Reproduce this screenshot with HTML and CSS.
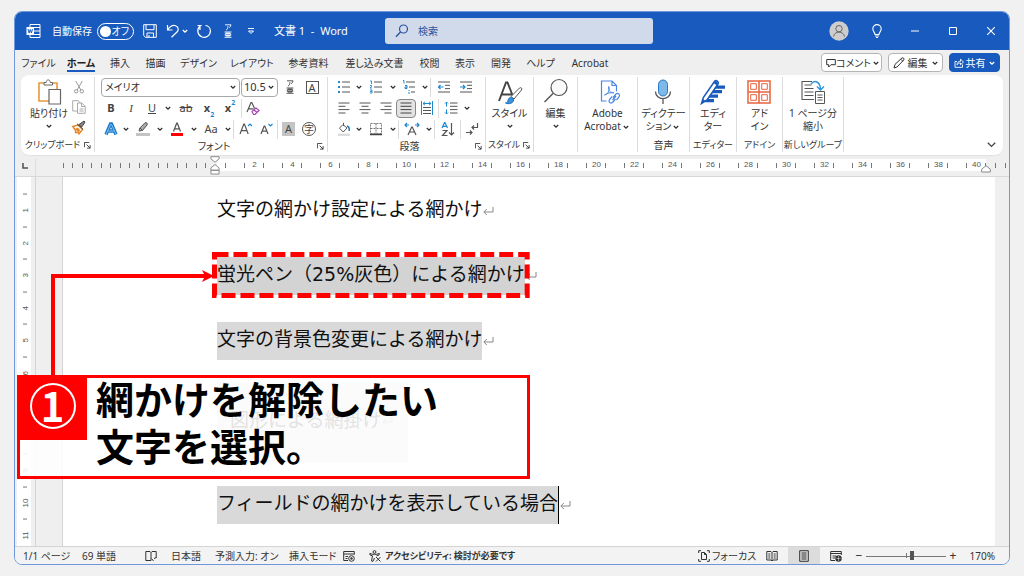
FILE: index.html
```html
<!DOCTYPE html>
<html lang="ja">
<head>
<meta charset="utf-8">
<title>文書 1 - Word</title>
<link rel="stylesheet" href="styles.css">
</head>
<body>
<svg class="defs" aria-hidden="true">
  <symbol id="chev" viewBox="0 0 8 8"><path d="M1.800 3l2.200 2.200L6.200 3" fill="none" stroke="currentColor" stroke-width="1.300"/></symbol>
  <symbol id="ret" viewBox="0 0 12 12"><path d="M11 2v5H2M4.800 4L1.800 7l3 3" fill="none" stroke="currentColor" stroke-width="1"/></symbol>
  <symbol id="launch" viewBox="0 0 8 8"><path d="M.5 6V.5H6M3 3l4 4M7 3.500V7H3.500" fill="none" stroke="currentColor"/></symbol>
  <symbol id="furi" viewBox="0 0 8 14"><path d="M1 .8h6c-.3 1.800-1 2.400-2 2.900M3.900 2.200c0 2.200-.6 3.200-1.900 4M.5 8h7M.5 13.300h7M3 8v5M5 8v5M1.300 9.600h5.400v2H1.300z" fill="none" stroke="currentColor" stroke-width=".9"/></symbol>
</svg>
<div class="window">
  <header class="titlebar">
    <div class="quick">
      <svg class="word-logo" viewBox="0 0 15 16"><path d="M4 4V1.500h10v13H4V12M4 4.500h10M8 8h6M8 11.500h6" fill="none" stroke="#fff"/><path d="M.5 4h7.500v8H.5z" fill="#fff"/><path d="M2 6l1.100 4L4.300 6.500 5.400 10 6.500 6" fill="none" stroke="#185abd"/></svg>
      <span class="autosave-label" id="as">自動保存</span>
      <button class="toggle" aria-labelledby="as"><i></i>オフ</button>
      <button class="bare save" aria-label="保存"><svg viewBox="0 0 14 14"><path d="M.7.7h12.600v12.600H2.500L.7 11.500zM3 .7v5h8v-5M4 13.300V9h6.500v4.300M6 11v2" fill="none" stroke="currentColor"/></svg></button>
      <button class="bare undo" aria-label="元に戻す"><svg viewBox="0 0 14 14"><path d="M1.500 1v5h5M1.800 5.700C4 2.500 7 .8 9.600 1.800c3 1.200 3.300 4.300 1.400 6.200L5.500 13.300" fill="none" stroke="currentColor" stroke-width="1.200"/></svg></button>
      <svg class="chev"><use href="#chev"/></svg>
      <button class="bare redo" aria-label="繰り返し"><svg viewBox="0 0 14 14"><path d="M8.500 1.500c3 .3 4.900 2.700 4.900 5.300A6.300 6.300 0 1 1 3 2.200M3 6V1.500M.5 1.500h4.200" fill="none" stroke="currentColor" stroke-width="1.200"/></svg></button>
      <button class="bare ruby" aria-label="ルビ"><svg viewBox="0 0 8 14"><use href="#furi"/></svg></button>
      <button class="bare more" aria-label="カスタマイズ"><svg viewBox="0 0 8 8"><path d="M1 1.500h6M1.500 4L4 6.500 6.500 4z" fill="none" stroke="currentColor"/></svg></button>
      <span class="doc-title">文書 1&nbsp; -&nbsp; Word</span>
    </div>
    <label class="search"><svg viewBox="0 0 14 14"><circle cx="8.500" cy="5" r="4" fill="none" stroke="currentColor" stroke-width="1.200"/><path d="M5.500 8L1 12.800" stroke="currentColor" stroke-width="1.300"/></svg><input type="text" placeholder="検索" aria-label="検索"></label>
    <div class="sys">
      <button class="bare avatar" aria-label="アカウント"><svg viewBox="0 0 20 20"><circle cx="10" cy="10" r="9.700" fill="#cdcdcd"/><circle cx="10" cy="7.700" r="3.200" fill="none" stroke="#666"/><path d="M4.500 15.500c.8-3 2.800-4.400 5.500-4.400s4.700 1.400 5.500 4.400" fill="none" stroke="#666"/></svg></button>
      <button class="bare bulb" aria-label="ヒント"><svg viewBox="0 0 10 14"><path d="M3 10.500C3 8.500.8 7.500.8 4.800a4.200 4.200 0 0 1 8.400 0C9.200 7.500 7 8.500 7 10.500zM3 12h4M4 13.500h2" fill="none" stroke="currentColor" stroke-width="1.100"/></svg></button>
      <button class="bare ctl" aria-label="最小化"><svg viewBox="0 0 10 10"><path d="M1 5h8" stroke="currentColor"/></svg></button>
      <button class="bare ctl" aria-label="最大化"><svg viewBox="0 0 10 10"><path d="M1.500 1.500h7v7h-7z" fill="none" stroke="currentColor"/></svg></button>
      <button class="bare ctl" aria-label="閉じる"><svg viewBox="0 0 10 10"><path d="M1.200 1.200l7.600 7.600M8.800 1.200L1.200 8.800" stroke="currentColor" stroke-width="1.100"/></svg></button>
    </div>
  </header>

  <div class="tabrow">
    <nav class="tabs">
      <a href="#">ファイル</a><a href="#" class="current"><span>ホーム</span></a><a href="#">挿入</a><a href="#">描画</a><a href="#">デザイン</a><a href="#">レイアウト</a><a href="#">参考資料</a><a href="#">差し込み文書</a><a href="#">校閲</a><a href="#">表示</a><a href="#">開発</a><a href="#">ヘルプ</a><a href="#">Acrobat</a>
    </nav>
    <div class="actions">
      <button class="act comment"><svg class="i10" viewBox="0 0 10 10"><path d="M.7 1.500h8.600v5.200H5L2.700 9V6.700h-2z" fill="none" stroke="currentColor"/></svg>コメント<svg class="chev"><use href="#chev"/></svg></button>
      <button class="act edit"><svg class="i12" viewBox="0 0 12 12"><path d="M1 11l1-3.600L9 .9c1.300-.6 2.500.8 1.800 2L4.200 9.900zM7.800 2.200l2 2" fill="none" stroke="currentColor"/></svg>編集<svg class="chev"><use href="#chev"/></svg></button>
      <button class="act share"><svg class="i10" viewBox="0 0 10 10"><path d="M3 3.500H1v5.800h7.500V6.500M3 6.800C3.200 4.500 4.500 3.300 6.500 3.300V1.200L9.500 4 6.500 6.800V5C5 5 4 5.500 3 6.800z" fill="none" stroke="currentColor" stroke-width=".9"/></svg>共有<svg class="chev"><use href="#chev"/></svg></button>
    </div>
  </div>

  <section class="ribbon">
    <div class="group g-clip">
      <div class="clip">
        <button class="big"><svg class="i26" viewBox="0 0 26 26"><path d="M3 4h18v18H3z" fill="#fff" stroke="#e8993b" stroke-width="1.600"/><path d="M8 6V3.500h2.200C10.500 0 14 0 14.300 3.500H16.500V6z" fill="#fff" stroke="#666"/><path d="M13 10.500h11.500V25H13z" fill="#fff" stroke="#666" stroke-width="1.200"/></svg><span>貼り付け</span><svg class="chev"><use href="#chev"/></svg></button>
        <div class="clip-side">
          <button class="t" aria-label="切り取り"><svg class="i14" viewBox="0 0 14 14"><path d="M3.700 1l5.200 9M10.300 1L5.100 10" stroke="#999" fill="none"/><circle cx="4.200" cy="11.300" r="1.700" fill="none" stroke="#999"/><circle cx="9.800" cy="11.300" r="1.700" fill="none" stroke="#999"/></svg></button>
          <button class="t" aria-label="コピー"><svg class="i14" viewBox="0 0 14 14"><path d="M5 11H.7V.7H6L8.500 3M5.500 3h4.200l3.500 3.300v7H5.500zM9.500 3v3.500H13M7.500 9h4M7.500 11h4" fill="none" stroke="#aaa"/></svg></button>
          <button class="t" aria-label="書式のコピー"><svg class="i14" viewBox="0 0 14 14"><path d="M.8 6.500l5.400-1.500 4.300 4.500L7 13.800 5.500 12.300 3.500 12.500 3.600 10.500z" fill="#fff" stroke="#e8862a" stroke-width="1.500"/><path d="M3 9l3-1.500 2 2.500-1 2.500z" fill="#e8862a"/><path d="M5 3.800L11 9.300M7 4.500L9 3.200l3-2.200 1 1-2 3.200-1.500 2z" fill="#888" stroke="#444"/></svg></button>
        </div>
      </div>
      <div class="glabel small"><span>クリップボード</span><svg class="launch"><use href="#launch"/></svg></div>
    </div>

    <div class="group g-font">
      <div class="rows">
        <div class="r">
          <label class="combo family"><select aria-label="フォント"><option>メイリオ</option></select><svg class="chev"><use href="#chev"/></svg></label>
          <label class="combo size"><select aria-label="フォント サイズ"><option>10.5</option></select><svg class="chev"><use href="#chev"/></svg></label>
          <button class="t w24" aria-label="ルビ"><svg class="furi" viewBox="0 0 8 14"><use href="#furi"/></svg></button>
          <button class="t w20" aria-label="囲み線"><span class="boxed">A</span></button>
        </div>
        <div class="r">
          <button class="t w20 b">B</button><button class="t w20 it">I</button><button class="t w22 un">U</button><svg class="chev"><use href="#chev"/></svg>
          <button class="t w26 st">ab</button><button class="t w20 b">x<sub>2</sub></button><button class="t w22 b">x<sup>2</sup></button>
          <button class="t w22 split" aria-label="書式クリア"><svg class="i14" viewBox="0 0 14 14"><path d="M1 11L5 1.500h.8l2.800 6M2.500 7.800h5" fill="none" stroke="#555" stroke-width="1.200"/><path d="M6 10.500l4-3.500 3 2.500-4 4H7.500zM8 9l3 2.500" fill="#fff" stroke="#a63fb5" stroke-width="1.200"/></svg></button>
        </div>
        <div class="r">
          <button class="t w20" aria-label="文字の効果"><svg class="i14" viewBox="0 0 14 14"><path d="M2 12.500L6.500 2h1L12 12.500M4 9h6" fill="none" stroke="#1f78c8" stroke-width="3.400"/><path d="M2 12.500L6.500 2.500h1L12 12.500M4 9h6" fill="none" stroke="#7cc0f2" stroke-width="1"/></svg></button><svg class="chev"><use href="#chev"/></svg>
          <button class="t w24" aria-label="蛍光ペン"><svg class="i14" viewBox="0 0 14 14"><path d="M0 11h14v3H0z" fill="#c4c4c4"/><path d="M3 9l.8-3L9 .8c1.500-.8 3 .8 2 2.200L6.500 8.500zM4 6l2.500 2.500" fill="#aaa" stroke="#555"/></svg></button><svg class="chev"><use href="#chev"/></svg>
          <button class="t w24" aria-label="フォントの色"><svg class="i14" viewBox="0 0 14 14"><path d="M1 11h12v3H1z" fill="#f00"/><path d="M3.500 9.500L6.700 1.200h.6L10.500 9.500M4.500 6.800h5" fill="none" stroke="#555" stroke-width="1.200"/></svg></button><svg class="chev"><use href="#chev"/></svg>
          <button class="t w24">Aa</button><svg class="chev"><use href="#chev"/></svg>
          <button class="t w24 split" aria-label="拡大"><svg class="i14" viewBox="0 0 14 14"><path d="M1 12L4.800 2h.6L9.200 12M2.200 8.600h5.800" fill="none" stroke="#555" stroke-width="1.200"/><path d="M9 4l2-2 2 2" fill="none" stroke="#1e88d2" stroke-width="1.200"/></svg></button><button class="t w20" aria-label="縮小"><svg class="i14" viewBox="0 0 14 14"><path d="M1 12L4.200 4h.6L8 12M2.200 9.200h4.600" fill="none" stroke="#555" stroke-width="1.200"/><path d="M8.500 2l2 2 2-2" fill="none" stroke="#1e88d2" stroke-width="1.200"/></svg></button>
          <button class="t w22 split"><span class="shade">A</span></button><button class="t w20"><span class="ring">字</span></button>
        </div>
      </div>
      <div class="glabel"><span>フォント</span><svg class="launch"><use href="#launch"/></svg></div>
    </div>

    <div class="group g-para">
      <div class="rows">
        <div class="r">
          <button class="t w20" aria-label="箇条書き"><svg class="i14" viewBox="0 0 14 14"><path d="M1 1h2v2H1zM1 6h2v2H1zM1 11h2v2H1z" fill="#1e88d2"/><path d="M5 2h8M5 7h8M5 12h8" stroke="#555"/></svg></button><svg class="chev"><use href="#chev"/></svg>
          <button class="t w24" aria-label="段落番号"><svg class="i14" viewBox="0 0 14 14"><path d="M1 1h1.500v3M1 5.500h1.500v1L1 8h2M1 10h2v3H1M1 11.500h2" fill="none" stroke="#1e88d2" stroke-width=".9"/><path d="M5 2h8M5 7h8M5 12h8" stroke="#555"/></svg></button><svg class="chev"><use href="#chev"/></svg>
          <button class="t w22" aria-label="アウトライン"><svg class="i14" viewBox="0 0 14 14"><path d="M1 .5h1v3M3 5.500h2v3H3v-1.500h2M7 10v1M7 12v2" fill="none" stroke="#1e88d2"/><path d="M4 2h9M7 7h6M9 12h4" stroke="#555"/></svg></button><svg class="chev"><use href="#chev"/></svg>
          <button class="t w26 split" aria-label="インデントを減らす"><svg class="i14" viewBox="0 0 14 14"><path d="M1 2h12M8 5.300h5M8 8.600h5M1 12h12" stroke="#555"/><path d="M6.500 7h-5M3.500 5l-2 2 2 2" fill="none" stroke="#1e88d2" stroke-width="1.200"/></svg></button><button class="t w20" aria-label="インデントを増やす"><svg class="i14" viewBox="0 0 14 14"><path d="M1 2h12M8 5.300h5M8 8.600h5M1 12h12" stroke="#555"/><path d="M1 7h5M4 5l2 2-2 2" fill="none" stroke="#1e88d2" stroke-width="1.200"/></svg></button>
        </div>
        <div class="r">
          <button class="t w20" aria-label="左揃え"><svg class="i14" viewBox="0 0 14 14"><path d="M1.500 2h11M1.500 5.300h7M1.500 8.600h11M1.500 12h7" stroke="#555"/></svg></button><button class="t w22" aria-label="中央揃え"><svg class="i14" viewBox="0 0 14 14"><path d="M1.500 2h11M3.500 5.300h7M1.500 8.600h11M3.500 12h7" stroke="#555"/></svg></button><button class="t w20" aria-label="右揃え"><svg class="i14" viewBox="0 0 14 14"><path d="M1.500 2h11M5.500 5.300h7M1.500 8.600h11M5.500 12h7" stroke="#555"/></svg></button><button class="t w20 on" aria-label="両端揃え"><svg class="i14" viewBox="0 0 14 14"><path d="M1.500 2h11M1.500 5.300h11M1.500 8.600h11M1.500 12h11" stroke="#444"/></svg></button><button class="t w22" aria-label="均等割り付け"><svg class="i14" viewBox="0 0 14 14"><path d="M1.500 0v14M12.500 0v14" stroke="#1e88d2"/><path d="M3 2.500h8M5 .8L3 2.500l2 1.700M9 .8l2 1.700-2 1.700" fill="none" stroke="#1e88d2"/><path d="M3 6.500h8M3 9.500h8M3 12.500h8" stroke="#555"/></svg></button>
          <button class="t w24 split" aria-label="行間"><svg class="i14" viewBox="0 0 14 14"><path d="M2.500 1v4.500M1 2.500L2.500 1 4 2.500M2.500 8.500V13M1 11.500L2.500 13 4 11.500" fill="none" stroke="#1e88d2"/><path d="M6 2h7.500M6 5.300h7.500M6 8.600h7.500M6 12h7.500" stroke="#555"/></svg></button><svg class="chev"><use href="#chev"/></svg>
        </div>
        <div class="r">
          <button class="t w20" aria-label="塗りつぶし"><svg class="i14" viewBox="0 0 14 14"><path d="M1 11.500h12V14H1z" fill="#ddd"/><path d="M6.500.8v3M6 2.500L2.500 6.200 6.200 10 10 6z" fill="none" stroke="#555"/><path d="M10 4c2 .5 2.500 2 2.200 5" fill="none" stroke="#1673c4" stroke-width="1.500"/></svg></button><svg class="chev"><use href="#chev"/></svg>
          <button class="t w24" aria-label="罫線"><svg class="i14" viewBox="0 0 14 14"><path d="M1.500 1.500h11v10h-11zM7 1.500v10M1.500 6.500h11" fill="none" stroke="#777" stroke-dasharray="2 1"/><path d="M1 12.500h12" stroke="#444" stroke-width="1.300"/></svg></button><svg class="chev"><use href="#chev"/></svg>
          <button class="t w26 split" aria-label="拡張書式"><svg class="i14" viewBox="0 0 14 14"><path d="M3 13L6.700 5h.6L11 13M4.500 10h5" fill="none" stroke="#555" stroke-width="1.200"/><path d="M0 3h4M2 1L0 3l2 2M14 3h-4M12 1l2 2-2 2" fill="none" stroke="#1e88d2" stroke-width="1.200"/></svg></button><svg class="chev"><use href="#chev"/></svg>
          <button class="t w26 split" aria-label="並べ替え"><svg class="i14" viewBox="0 0 14 14"><path d="M1 6L3.500.5h.5L6.500 6M2 4.300h3.600" fill="none" stroke="#1e88d2" stroke-width="1.200"/><path d="M1.500 8.500h4.500L1.500 13.500H6.500M10.500 1v12M8 10.500l2.500 2.500 2.500-2.500" fill="none" stroke="#555" stroke-width="1.200"/></svg></button><button class="t w22 split" aria-label="編集記号"><svg class="i14" viewBox="0 0 14 14"><path d="M12.500 1v4.500H7M9 3.500l-2 2 2 2M1 10.500h6M5 8.500l2 2-2 2" fill="none" stroke="#555" stroke-width="1.200"/></svg></button>
        </div>
      </div>
      <div class="glabel"><span>段落</span><svg class="launch"><use href="#launch"/></svg></div>
    </div>

    <div class="group g-style">
      <button class="big"><svg class="i26" viewBox="0 0 26 26"><path d="M2 22L9 3.500h1.500L17 20M4.500 15.500h10" fill="none" stroke="#444" stroke-width="1.900"/><path d="M14 17.500L22.500 9c1.500-1 3 .3 2 2L17 20z" fill="#fff" stroke="#555"/><path d="M8.500 24c2.500 0 2-2 3-4 1.500-2.500 5-1.500 5 1 0 3.500-5 4.500-8 3z" fill="#3b93dc" stroke="#1a6fc0"/></svg><span>スタイル</span><svg class="chev"><use href="#chev"/></svg></button>
      <div class="glabel small"><span>スタイル</span><svg class="launch"><use href="#launch"/></svg></div>
    </div>
    <div class="group g-edit">
      <button class="big"><svg class="i26" viewBox="0 0 26 26"><circle cx="16" cy="8.500" r="8" fill="#fafafa" stroke="#555" stroke-width="1.200"/><path d="M10 14.500L1.500 23" stroke="#555" stroke-width="1.400"/></svg><span>編集</span><svg class="chev"><use href="#chev"/></svg></button>
      <div class="glabel"></div>
    </div>
    <div class="group g-acro">
      <button class="big"><svg class="i26" viewBox="0 0 26 26"><path d="M11.500 22H6.500V2H17l4.500 4.500v6M17 2v4.500h4.500" fill="none" stroke="#4a86e8" stroke-width="1.200"/><path d="M9.500 16c4-1 5-4.500 4.300-8.500-.7 4 1.200 6 5 6.300-4-.3-6 .2-9.300 2.200z" fill="none" stroke="#4a86e8"/><path d="M18 18.500l3-3.500c2.500-1.500 4.500.7 3 3l-2.500 3M20.500 20l-3 3.500c-2.500 1.500-4.500-.7-3-3l2.500-3M17.500 21l3.500-4" fill="none" stroke="#4a86e8" stroke-width="1.200"/></svg><span>Adobe</span><span class="ln">Acrobat<svg class="chev"><use href="#chev"/></svg></span></button>
      <div class="glabel"></div>
    </div>
    <div class="group g-dict">
      <button class="big"><svg class="i26" viewBox="0 0 26 26"><rect x="7.500" y="1" width="9" height="16" rx="4.500" fill="#7db9ea" stroke="#2a77bd"/><path d="M4.500 12.500c0 9.500 15 9.500 15 0M12 20v5" fill="none" stroke="#555" stroke-width="1.300"/></svg><span>ディクテー</span><span class="ln">ション<svg class="chev"><use href="#chev"/></svg></span></button>
      <div class="glabel"><span>音声</span></div>
    </div>
    <div class="group g-editor">
      <button class="big"><svg class="i26" viewBox="0 0 26 26"><path d="M14 8.200h11M12 12.700h10M9 17.200h9M5 21.700h9" stroke="#185abd" stroke-width="3.200"/><path d="M1.500 24.500l1.800-6L14.500 2.500c1.500-2 4.700 0 3.500 2.500L7 21z" fill="#fff" stroke="#185abd" stroke-width="1.500"/><path d="M1.500 24.500l1.500-4.500 2.500 2zM13.500 4l3.500 2.500 1-2.500-2-2z" fill="#185abd"/></svg><span>エディ</span><span>ター</span></button>
      <div class="glabel small"><span>エディター</span></div>
    </div>
    <div class="group g-addin">
      <button class="big"><svg class="i26" viewBox="0 0 26 26"><path d="M1 2h22v22H1zM12 2v22M1 13h22" fill="none" stroke="#e8623c" stroke-width="1.500"/><path d="M3.700 4.700h5.600v5.600H3.700zM14.700 4.700h5.600v5.600h-5.600zM3.700 15.700h5.600v5.600H3.700zM14.700 15.700h5.600v5.600h-5.600z" fill="none" stroke="#e8623c"/></svg><span>アド</span><span>イン</span></button>
      <div class="glabel small"><span>アドイン</span></div>
    </div>
    <div class="group g-new">
      <button class="big"><svg class="i26" viewBox="0 0 26 26"><path d="M14 20.500H2v-18h10M4.500 6h7M4.500 9.500h9M4.500 13h9M4.500 16.500h9" fill="none" stroke="#555" stroke-width="1.100"/><path d="M15.500 12.500h9v12h-9zM17.500 16h5M17.500 18.500h5M17.500 21h5" fill="#fff" stroke="#555"/><path d="M11 5c3.500-4.500 9-2.500 9.500 5M17 7.500l3.500 3.500L24 7.500" fill="none" stroke="#2e95dc" stroke-width="1.400"/></svg><span>1 ページ分</span><span>縮小</span></button>
      <div class="glabel small"><span>新しいグループ</span></div>
    </div>
    <button class="bare collapse" aria-label="リボンを折りたたむ"><svg viewBox="0 0 8 8"><path d="M.7 2.500L4 5.700l3.300-3.200" fill="none" stroke="#444" stroke-width="1.200"/></svg></button>
  </section>

  <div class="ruler">
    <div class="corner"><svg viewBox="0 0 6 6"><path d="M1 0v5h5" fill="none" stroke="#555" stroke-width="1.600"/></svg></div>
    <div class="before"><i></i></div>
    <div class="active">
      <svg class="hang" viewBox="0 0 10 20"><path d="M.7.7h8.600V3L5 6.500.7 3zM5 9l4.300 3.500V15H.7v-2.500zM.7 15h8.600v4H.7z" fill="#fff" stroke="#888"/></svg>
      <ol><li>2</li><li>4</li><li>6</li><li>8</li><li>10</li><li>12</li><li>14</li><li>16</li><li>18</li><li>20</li><li>22</li><li>24</li><li>26</li><li>28</li><li>30</li><li>32</li><li>34</li><li>36</li><li>38</li><li>40</li></ol>
      <svg class="rindent" viewBox="0 0 10 8"><path d="M5 .7l4.300 3.500V7H.7V4.200z" fill="#fff" stroke="#888"/></svg>
    </div>
    <div class="after"></div>
  </div>

  <main class="desk">
    <ol class="vruler"><li>1</li><li>2</li><li>3</li><li>4</li><li>5</li><li>6</li><li>7</li><li>8</li><li>9</li><li>10</li><li>11</li></ol>
    <div class="gutter"></div>
    <article class="page">
      <p><span class="run">文字の網かけ設定による網かけ</span><svg class="ret"><use href="#ret"/></svg></p>
      <p><span class="run hl">蛍光ペン（25%灰色）による網かけ<svg class="dash" viewBox="0 0 318 46" preserveAspectRatio="none"><rect x="2.500" y="2.500" width="313" height="41" fill="none" stroke="#f00" stroke-width="5" stroke-dasharray="14 5"/></svg></span><svg class="ret"><use href="#ret"/></svg></p>
      <p><span class="run sh">文字の背景色変更による網かけ</span><svg class="ret"><use href="#ret"/></svg></p>
      <div class="shape">図形による網掛け<svg class="ret"><use href="#ret"/></svg></div>
      <p><span class="run sh caret">フィールドの網かけを表示している場合</span><svg class="ret"><use href="#ret"/></svg></p>
    </article>
    <div class="scroll"></div>
    <svg class="arrow" viewBox="0 0 164 108"><path d="M2 108V8H154" fill="none" stroke="#f00" stroke-width="4"/><path d="M151 2l12 6-12 6 3-6z" fill="#f00"/></svg>
    <aside class="callout"><div class="num"><span>1</span></div><div class="msg">網かけを解除したい<br>文字を選択。</div></aside>
  </main>

  <footer class="status">
    <span class="s-page">1/1 ページ</span><span class="s-words">69 単語</span>
    <svg class="s-book i12" viewBox="0 0 12 12"><path d="M6 10.500H.8V1.500H5L6 2.500l1-1h4.200V8M6 2.500v8M6.500 8.500l2 2.500M9 8.500l2.500-1" fill="none" stroke="currentColor"/></svg>
    <span class="s-lang">日本語</span><span class="s-pred">予測入力: オン</span><span class="s-mode">挿入モード</span>
    <svg class="s-mac i12" viewBox="0 0 12 12"><path d="M5 10.500H.7V1.500h10.600v3M.7 4h10.600M2.500 6.500H5M2.500 8.500H4.500" fill="none" stroke="currentColor"/><circle cx="8.500" cy="8.500" r="2.800" fill="none" stroke="currentColor"/><circle cx="8.500" cy="8.500" r="1.200" fill="currentColor"/></svg>
    <svg class="s-acc i12" viewBox="0 0 12 12"><circle cx="5.500" cy="2" r="1.400" fill="none" stroke="currentColor"/><path d="M.8 3.500c3 1.200 6.400 1.200 9.600 0L10 5l-2.500.8M.8 3.500L1 5l2.500.8L2.500 11l1.500.3L5.500 8M7 7l4.500 4.500M11.500 7L7 11.500" fill="none" stroke="currentColor"/></svg>
    <span class="s-access">アクセシビリティ: 検討が必要です</span>
    <div class="views">
      <button class="bare focus"><svg class="i12" viewBox="0 0 12 12"><path d="M3 .7H.7V3M9 .7h2.300V3M3 11.300H.7V9M9 11.300h2.300V9M3.500 2.500h3l2 2v5h-5zM6.500 2.500v2h2" fill="none" stroke="currentColor"/></svg>フォーカス</button>
      <button class="bare view" aria-label="閲覧モード"><svg class="i12" viewBox="0 0 12 12"><path d="M6 2.500L5 1.500H.8v8.500H5l1 1 1-1h4.200V1.500H7zV11M2.300 4h2M2.300 6h2M2.300 8h2M7.700 4h2M7.700 6h2M7.700 8h2" fill="none" stroke="currentColor"/></svg></button>
      <button class="bare view sel" aria-label="印刷レイアウト"><svg class="i12" viewBox="0 0 12 12"><path d="M1.700.7h8.600v10.600H1.700zM3.500 3h5M3.500 5h5M3.500 7h5M3.500 9h5" fill="none" stroke="currentColor"/></svg></button>
      <button class="bare view" aria-label="Web レイアウト"><svg class="i12" viewBox="0 0 12 12"><path d="M5 10.500H.7V1.500h10.600V5M.7 3.500h10.600M2.500 6H6M2.500 8H5" fill="none" stroke="currentColor"/><circle cx="8.500" cy="8.500" r="3.200" fill="currentColor"/><path d="M6.500 8.500h4M8.500 6v5" stroke="#ddd" stroke-width=".6"/></svg></button>
      <button class="bare zoomb" aria-label="縮小">−</button>
      <input type="range" min="0" max="100" value="58" aria-label="ズーム">
      <button class="bare zoomb" aria-label="拡大">+</button>
      <span class="pct">170%</span>
    </div>
  </footer>
</div>
</body>
</html>
```
FILE: styles.css
```css
* { box-sizing: border-box; }
html, body { height: 100%; }
body {
  margin: 0;
  padding: 11px 14px;
  background: #f1f1f1;
  color: #333;
  font: 10px/14px "Noto Sans", "Noto Sans CJK JP", sans-serif;
  font-feature-settings: "palt";
}
button, input, select { font: inherit; color: inherit; font-feature-settings: inherit; }
ol, p { margin: 0; padding: 0; list-style: none; }
.defs { position: absolute; width: 0; height: 0; }
svg { flex: none; overflow: visible; }
.bare, .t, .big { background: none; border: 0; padding: 0; display: flex; align-items: center; justify-content: center; }
.i10 { width: 10px; height: 10px; }
.i12 { width: 12px; height: 12px; }
.i14 { width: 14px; height: 14px; }
.i26 { width: 26px; height: 26px; }
.chev { width: 8px; height: 8px; margin: 0 1px; }

.window {
  height: 100%;
  display: flex;
  flex-direction: column;
  border: 1px solid #6f97dc;
  border-radius: 8px;
  overflow: hidden;
  background: #efefef;
}

.titlebar { height: 38px; background: #185abd; color: #fff; display: flex; align-items: center; padding-right: 8px; flex: none; }
.quick { flex: 0 0 370px; display: flex; align-items: center; padding-left: 11px; white-space: nowrap; }
.word-logo { width: 15px; height: 16px; }
.autosave-label { margin: 0 5px 0 11px; }
.toggle { width: 37px; height: 17px; border: 1px solid #fff; border-radius: 9px; background: none; padding: 0 4px 0 2px; display: flex; align-items: center; justify-content: space-between; color: #fff; }
.toggle i { width: 11px; height: 11px; border-radius: 50%; background: #fff; }
.save { margin-left: 9px; }
.save svg, .undo svg, .redo svg { width: 14px; height: 14px; }
.undo { margin-left: 9px; }
.redo { margin-left: 7px; }
.ruby { margin-left: 13px; }
.ruby svg, .furi { width: 8px; height: 14px; }
.more { margin-left: 15px; }
.more svg { width: 8px; height: 8px; }
.doc-title { margin-left: 19px; font-size: 11px; }
.search { flex: 0 1 268px; height: 26px; background: #d0daeb; border-radius: 3px; color: #2b529c; display: flex; align-items: center; padding-left: 10px; }
.search svg { width: 14px; height: 14px; }
.search input { border: 0; background: none; outline: 0; padding: 0 0 0 9px; width: 100%; }
.search input::placeholder { color: #2b529c; opacity: 1; }
.sys { margin-left: auto; display: flex; align-items: center; }
.avatar svg { width: 20px; height: 20px; }
.bulb { width: 20px; margin-left: 18px; }
.bulb svg { width: 10px; height: 14px; }
.ctl { width: 20px; margin-left: 18px; }
.ctl svg { width: 10px; height: 10px; }

.tabrow { height: 25px; flex: none; display: flex; justify-content: space-between; padding: 0 9px 0 2px; }
.tabs { display: grid; grid-template-columns: 43px 42px 36px 35px 51px 56px 57px 75px 35px 36px 36px 43px 56px; align-items: center; text-align: center; white-space: nowrap; }
.tabs a { color: #333; text-decoration: none; }
.tabs .current { font-weight: 700; color: #222; }
.tabs .current span { border-bottom: 2px solid #185abd; }
.actions { display: flex; gap: 6px; align-items: center; }
.act { height: 19px; border: 1px solid #b5b5b5; border-radius: 4px; background: #fff; display: flex; align-items: center; justify-content: space-between; padding: 0 2px 0 4px; white-space: nowrap; }
.comment { width: 61px; }
.edit { width: 55px; }
.share { width: 51px; background: #185abd; border-color: #185abd; color: #fff; }

.ribbon { flex: none; margin: 0 6px; height: 80px; background: #fff; border-radius: 8px; display: flex; padding: 2px 0 1px; box-shadow: 0 1px 1px #e0e0e0; }
.group { display: flex; flex-direction: column; justify-content: space-between; border-right: 1px solid #dcdcdc; margin-bottom: 2px; }
.glabel { height: 14px; display: flex; align-items: center; justify-content: center; white-space: nowrap; position: relative; }
.small { font-size: 9px; }
.glabel .launch { width: 7px; height: 7px; position: absolute; right: 3px; top: 4px; }
.g-clip { width: 74px; }
.g-clip .glabel { padding-right: 10px; }
.g-font { width: 233px; padding-left: 6px; }
.g-para { width: 158px; padding-left: 6px; }
.g-style { width: 48px; }
.g-style .glabel { padding-right: 11px; }
.g-edit { width: 44px; }
.g-acro { width: 60px; }
.g-dict { width: 52px; }
.g-editor { width: 47px; }
.g-addin { width: 46px; }
.g-new { width: 61px; }
.big { flex-direction: column; justify-content: flex-start; line-height: 13px; padding-top: 2px; white-space: nowrap; }
.big .i26 { margin-bottom: 2px; }
.big > .chev { margin-top: 2px; }
.ln { display: flex; align-items: center; }
.clip { display: flex; padding-left: 7px; gap: 2px; }
.clip .big { width: 42px; }
.clip-side { display: flex; flex-direction: column; }
.clip-side .t { height: 20px; }
.r { display: flex; align-items: center; height: 20px; }
.r + .r { margin-top: 1px; }
.t { height: 19px; line-height: 12px; flex: none; font-size: 11px; color: #444; }
.w20 { width: 20px; }
.w22 { width: 22px; }
.w24 { width: 24px; }
.w26 { width: 26px; }
.b { font-weight: 700; }
.it { font-style: italic; font-family: "Liberation Serif", serif; }
.un { text-decoration: underline; }
.st { text-decoration: line-through; }
.t sub, .t sup { font-size: 7px; line-height: 7px; color: #1e88d2; }
.t sub { align-self: flex-end; }
.t sup { align-self: flex-start; }
.split { border-left: 1px solid #dcdcdc; }
.on { background: #e3e3e3; border: 1px solid #888; border-radius: 4px; }
.combo { display: flex; align-items: center; height: 19px; border: 1px solid #a8a8a8; border-radius: 4px; padding-right: 1px; }
.combo select { appearance: none; border: 0; background: none; padding: 0 0 0 3px; flex: 1; min-width: 0; outline: 0; }
.family { width: 139px; margin-right: 1px; }
.size { width: 37px; }
.size select { font-size: 11px; padding-left: 2px; }
.boxed { border: 1px solid #555; width: 13px; height: 13px; line-height: 11px; text-align: center; }
.shade { background: #c4c4c4; width: 13px; height: 14px; line-height: 14px; text-align: center; }
.ring { border: 1px solid #555; border-radius: 50%; width: 14px; height: 14px; line-height: 12px; font-size: 10px; text-align: center; }
.collapse { margin: auto 7px 5px auto; }
.collapse svg { width: 9px; height: 9px; }

.ruler { flex: none; height: 22px; display: flex; border-bottom: 1px solid #d8d8d8; overflow: hidden; padding-top: 4px; color: #555; }
.corner { flex: 0 0 21px; border-right: 1px solid #ddd; padding: 4px 0 0 7px; }
.corner svg { width: 6px; height: 6px; display: block; }
.before { flex: 0 0 181px; padding: 4px 2px 0 27px; }
.before i { display: block; height: 5px; background: linear-gradient(90deg, #777 1px, transparent 1px 9px, #777 9px 10px, transparent 10px) 0 0 / 19px 5px repeat-x; }
.active { flex: 0 0 769px; min-width: 0; height: 12px; background: linear-gradient(90deg, #777 1px, transparent 1px) 8px 4px / 19px 5px repeat-x #fff; position: relative; }
.ruler ol { display: flex; padding-left: 28px; overflow: hidden; }
.ruler li { flex: 0 0 38px; padding-right: 19px; text-align: center; font: 8px/12px "Liberation Sans", Arial, sans-serif; }
.hang { position: absolute; width: 10px; height: 19px; left: -7px; top: -3px; z-index: 1; }
.rindent { position: absolute; width: 10px; height: 8px; right: -5px; top: 6px; }
.after { flex: 1; background: linear-gradient(90deg, #777 1px, transparent 1px) 9px 4px / 10px 5px repeat-x; height: 10px; }

.desk { flex: 1; min-height: 0; display: flex; position: relative; overflow: hidden; background: #fff; }
.vruler { flex: 0 0 20px; display: flex; flex-direction: column; padding-top: 17px; margin-bottom: -6px; background: linear-gradient(90deg, #efefef 2px, #fff 2px 16px, #efefef 16px); }
.vruler li { flex: 1; display: flex; align-items: center; justify-content: center; writing-mode: vertical-rl; transform: rotate(180deg); font: 8px/10px "Liberation Sans", Arial, sans-serif; color: #555; position: relative; padding-right: 1px; }
.vruler li::after { content: ""; position: absolute; bottom: 0; left: 8px; width: 4px; height: 1px; background: #777; }
.gutter { flex: 0 0 28px; background: #efefef; border: solid #d4d4d4; border-width: 0 1px; }
.page { flex: 1; padding: 15px 0 0 154px; font: 19px/34px "DejaVu Sans", "Noto Sans CJK JP", sans-serif; font-feature-settings: normal; color: #111; white-space: nowrap; }
.page p { display: flex; align-items: center; height: 38px; margin-bottom: 27px; }
.run { position: relative; height: 38px; }
.page .hl { background: #d3d3d3; }
.page .sh { background: #d9d9d9; }
.caret { border-right: 1px solid #000; }
.ret { width: 12px; height: 12px; color: #888; }
.dash { position: absolute; left: -5px; top: -5px; width: calc(100% + 10px); height: 46px; }
.shape { width: 191px; height: 80px; background: #d9d9d9; padding: 21px 0 0 13px; margin: -5px 0 24px; }
.scroll { flex: 0 0 14px; background: #efefef; }
.arrow { position: absolute; left: 36px; top: 91px; width: 164px; height: 108px; }
.callout { position: absolute; left: 2px; top: 198px; width: 513px; height: 104px; border: 3px solid #f00; background: rgba(255, 255, 255, .88); display: flex; color: #000; }
.num { flex: 0 0 67px; height: 62px; background: #f00; color: #fff; display: flex; align-items: flex-start; justify-content: center; padding: 5px 2px 0 0; }
.num span { width: 46px; height: 46px; border: 2px solid #fff; border-radius: 50%; font: 700 40px/40px "Noto Sans CJK JP", sans-serif; text-align: center; }
.msg { margin-top: -4px; padding-left: 9px; font: 700 38px/47px "Noto Sans CJK JP", sans-serif; font-feature-settings: normal; white-space: nowrap; }

.status { flex: none; height: 18px; display: flex; align-items: center; background: #f3f3f3; border-top: 1px solid #d4d4d4; padding: 0 14px 0 8px; white-space: nowrap; }
.s-page { width: 59px; }
.s-words { width: 63px; }
.s-book { margin-right: 14px; }
.s-lang { width: 44px; }
.s-pred { width: 74px; }
.s-mode { width: 54px; }
.s-mac { margin-right: 14px; }
.s-acc { margin-right: 4px; }
.s-access { font-weight: 700; font-size: 9px; }
.views { margin-left: auto; display: flex; align-items: center; height: 100%; }
.focus { gap: 2px; width: 58px; }
.view { width: 32px; height: 100%; }
.sel { background: #dcdcdc; }
.zoomb { width: 14px; font-size: 12px; }
.views input { appearance: none; width: 80px; height: 12px; margin: 0; background: linear-gradient(#777, #777) 0 6px / 100% 1px no-repeat, linear-gradient(#777, #777) 50% 50% / 1px 5px no-repeat; }
.views input::-webkit-slider-thumb { appearance: none; width: 4px; height: 9px; background: #555; }
.pct { margin-left: 7px; width: 28px; text-align: right; }
```
